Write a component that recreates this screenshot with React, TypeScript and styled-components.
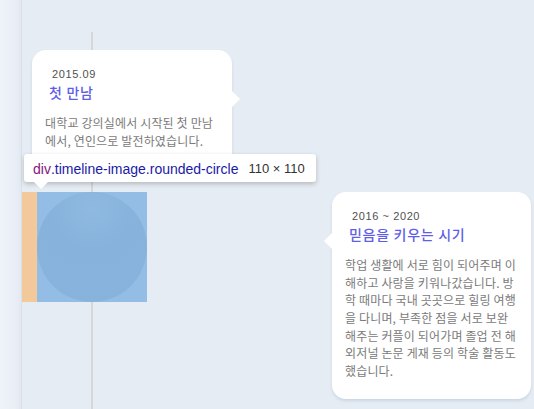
import React from "react";
import styled, { createGlobalStyle } from "styled-components";

const Global = createGlobalStyle`
  html, body { margin: 0; padding: 0; }
  body { width: 534px; height: 409px; overflow: hidden; background: #e6ecf3; }
  * { box-sizing: border-box; }
`;

const Page = styled.div`
  position: relative;
  display: flex;
  width: 534px;
  height: 409px;
  overflow: hidden;
`;

const Sidebar = styled.div`
  width: 22px;
  flex: none;
  background: linear-gradient(to right, #eef2f9 0%, #eaeef6 70%, #e4e9f1 100%);
  border-right: 1px solid #dae0e8;
`;

const Main = styled.div`
  position: relative;
  flex: 1;
  background: #e6ecf3;
  padding-top: 50px;
  &::before {
    content: "";
    position: absolute;
    left: 69px;
    top: 32px;
    bottom: 0;
    width: 2px;
    background: #d4d6d9;
    z-index: 0;
  }
`;

const Card = styled.div<{ $side: "left" | "right" }>`
  position: relative;
  z-index: 1;
  width: ${(p) => (p.$side === "left" ? 200 : 199)}px;
  background: #fff;
  border-radius: 14px;
  padding: 16px 13px 20px 13px;
  box-shadow: 0 2px 3px rgba(150, 175, 210, 0.35);
  margin-left: ${(p) => (p.$side === "left" ? "10px" : "auto")};
  margin-right: ${(p) => (p.$side === "left" ? "0" : "3px")};
  &::after {
    content: "";
    position: absolute;
    top: 41px;
    ${(p) => (p.$side === "left" ? "right: -8px;" : "left: -8px;")}
    border-top: 8px solid transparent;
    border-bottom: 8px solid transparent;
    ${(p) =>
      p.$side === "left"
        ? "border-left: 8px solid #fff;"
        : "border-right: 8px solid #fff;"}
  }
`;

const DateLabel = styled.div`
  font-family: "Liberation Sans", Arial, sans-serif;
  font-size: 11px;
  line-height: 16px;
  letter-spacing: 0.6px;
  color: #505050;
  padding-left: 7px;
`;

const Title = styled.div`
  font-family: "Noto Sans CJK KR", "Noto Sans", sans-serif;
  font-size: 14px;
  line-height: 20px;
  font-weight: 500;
  letter-spacing: 0.7px;
  color: #5f5ee8;
  padding-left: 4px;
  margin-bottom: 12px;
`;

const Desc = styled.p`
  margin: 0;
  font-family: "Noto Sans CJK KR", "Noto Sans", sans-serif;
  font-size: 12px;
  letter-spacing: 0.15px;
  line-height: 17.6px;
  color: #7a7a7a;
`;

const Row = styled.div`
  display: flex;
  align-items: flex-start;
  margin-top: 23px;
`;

const ImageSlot = styled.div`
  position: relative;
  z-index: 1;
  display: flex;
  flex: none;
  height: 110px;
`;

const MarginBox = styled.div`
  width: 15px;
  background: #f3c89b;
`;

const ImageBox = styled.div`
  width: 110px;
  height: 110px;
  background: #93bde4;
  display: flex;
  align-items: center;
  justify-content: center;
`;

const Circle = styled.div`
  width: 110px;
  height: 110px;
  border-radius: 50%;
  background: radial-gradient(circle at 50% 15%, #8fb9e0 0%, #86b2db 40%, #88b3dc 100%);
`;

const Tooltip = styled.div`
  position: absolute;
  left: 24px;
  top: 154px;
  height: 28px;
  width: 292px;
  background: #fff;
  border-radius: 3px;
  box-shadow: 0 2px 5px rgba(0, 0, 0, 0.22);
  display: flex;
  align-items: center;
  padding: 1px 9px 0;
  font-family: "Liberation Sans", Arial, sans-serif;
  font-size: 14px;
  white-space: nowrap;
  z-index: 5;
  &::after {
    content: "";
    position: absolute;
    left: 10px;
    top: 28px;
    border-left: 7px solid transparent;
    border-right: 7px solid transparent;
    border-top: 7px solid #fff;
  }
`;

const Tag = styled.span`
  color: #881280;
`;

const Cls = styled.span`
  color: #1a1aa6;
`;

const Size = styled.span`
  color: #333;
  font-size: 13px;
  margin-left: 10px;
`;

export default function App() {
  return (
    <>
      <Global />
      <Page>
        <Sidebar />
        <Main>
          <Card $side="left">
            <DateLabel>2015.09</DateLabel>
            <Title>첫 만남</Title>
            <Desc>대학교 강의실에서 시작된 첫 만남에서, 연인으로 발전하였습니다.</Desc>
          </Card>
          <Row>
            <ImageSlot>
              <MarginBox />
              <ImageBox>
                <Circle />
              </ImageBox>
            </ImageSlot>
            <Card $side="right">
              <DateLabel>2016 ~ 2020</DateLabel>
              <Title>믿음을 키우는 시기</Title>
              <Desc>
                학업 생활에 서로 힘이 되어주며 이해하고 사랑을 키워나갔습니다. 방학 때마다 국내 곳곳으로 힐링 여행을 다니며, 부족한 점을 서로 보완해주는 커플이 되어가며 졸업 전 해외저널 논문 게재 등의 학술 활동도 했습니다.
              </Desc>
            </Card>
          </Row>
        </Main>
        <Tooltip>
          <Tag>div</Tag>
          <Cls>.timeline-image.rounded-circle</Cls>
          <Size>110 × 110</Size>
        </Tooltip>
      </Page>
    </>
  );
}
